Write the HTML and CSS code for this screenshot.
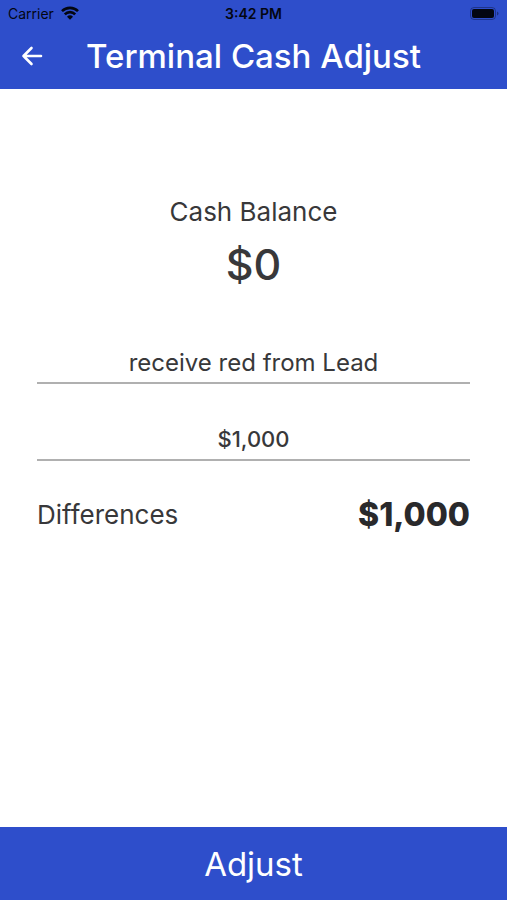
FILE: index.html
```html
<!DOCTYPE html>
<html lang="en">
<head>
<meta charset="utf-8">
<meta name="viewport" content="width=device-width, initial-scale=1">
<title>Terminal Cash Adjust</title>
<link rel="stylesheet" href="styles.css">
</head>
<body>
<form class="screen">
  <header class="top">
    <div class="status">
      <div class="carrier">Carrier
        <svg class="wifi" viewBox="0 0 18 14" aria-hidden="true"><path d="M1 5.200a11.300 11.300 0 0 1 16 0M3.800 8.300a7.200 7.200 0 0 1 10.400 0" fill="none" stroke="currentColor" stroke-width="2.600"/><path d="M9 13.700 6 10.700a4.300 4.300 0 0 1 6 0z" fill="currentColor"/></svg>
      </div>
      <time class="clock">3:42 PM</time>
      <svg class="battery" viewBox="0 0 29 13" aria-hidden="true"><rect x=".5" y=".5" width="25" height="12" rx="3.500" fill="none" stroke="currentColor" opacity=".35"/><rect x="2" y="2" width="22" height="9" rx="2" fill="currentColor"/><path d="M27 4.500q1.500.5 1.500 2t-1.500 2z" fill="currentColor" opacity=".4"/></svg>
    </div>
    <div class="nav">
      <button class="back" type="button" aria-label="Back"><svg viewBox="0 0 22 20" aria-hidden="true"><path d="M20 10H2.500M10.500 2 2.500 10l8 8" fill="none" stroke="currentColor" stroke-width="2.600" stroke-linecap="round" stroke-linejoin="round"/></svg></button>
      <h1 class="title">Terminal Cash Adjust</h1>
    </div>
  </header>
  <main class="content">
    <section class="balance">
      <h2 class="label">Cash Balance</h2>
      <p class="amount">$0</p>
    </section>
    <input class="field" type="text" aria-label="Reason" value="receive red from Lead">
    <input class="field field-money" type="text" aria-label="Amount" value="$1,000">
    <div class="difference">
      <span class="label">Differences</span>
      <output class="total">$1,000</output>
    </div>
  </main>
  <button class="adjust" type="submit">Adjust</button>
</form>
</body>
</html>
```
FILE: styles.css
```css
* { box-sizing: border-box; }
body { margin: 0; font-family: Inter, "Liberation Sans", sans-serif; color: #38383a; background: #fff; }
h1, h2, p { margin: 0; font-weight: 500; }
.screen { min-height: 100vh; display: flex; flex-direction: column; }
.top { background: #2e4ecb; color: #fff; padding-bottom: 4px; }
.status { display: grid; grid-template-columns: 1fr auto 1fr; align-items: center; height: 26px; padding: 0 8px; color: #030611; font-size: 14px; }
.carrier { display: flex; align-items: center; gap: 7px; }
.wifi { width: 18px; height: 14px; }
.clock { font-weight: 600; }
.battery { width: 29px; height: 13px; justify-self: end; }
.nav { display: grid; grid-template-columns: 48px 1fr 48px; align-items: center; height: 59px; padding: 0 8px; }
.back { height: 48px; padding: 0; border: 0; background: none; color: #fff; display: grid; place-items: center; }
.back svg { width: 22px; height: 20px; }
.title { text-align: center; font-size: 33px; line-height: 40px; white-space: nowrap; }
.content { flex: 1; padding: 105px 37px 24px; }
.balance { text-align: center; margin-bottom: 42px; }
.label { font-size: 26px; line-height: 36px; font-weight: 400; }
.amount { font-size: 43px; line-height: 68px; }
.field { display: block; width: 100%; height: 44px; margin-bottom: 33px; padding: 2px 0 0; border: 0; border-bottom: 2px solid #b0b0b0; border-radius: 0; background: none; color: inherit; font: 400 24px Inter, sans-serif; text-align: center; }
.field-money { font-size: 22px; font-weight: 500; margin-bottom: 30px; }
.difference { display: flex; justify-content: space-between; align-items: center; }
.total { color: #29292b; font-size: 32px; line-height: 48px; font-weight: 800; }
.adjust { height: 73px; border: 0; background: #2e4ecb; color: #fff; font: 400 33px Inter, sans-serif; }
```
